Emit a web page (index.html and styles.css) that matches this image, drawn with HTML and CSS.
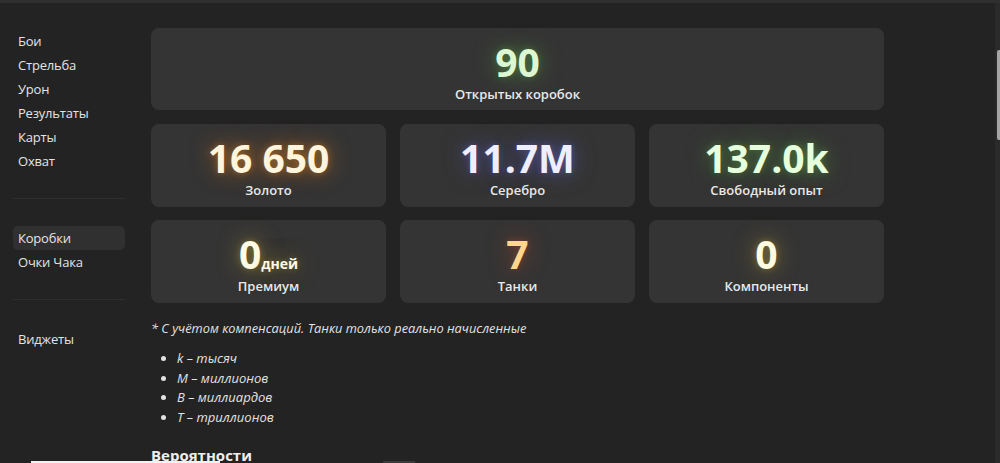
FILE: index.html
```html
<!DOCTYPE html>
<html lang="ru">
<head>
<meta charset="utf-8">
<link rel="stylesheet" href="styles.css">
</head>
<body>
<div class="topstrip"></div>
<div class="page">
  <aside class="sidebar">
    <nav class="navgroup">
      <a class="navitem">Бои</a>
      <a class="navitem">Стрельба</a>
      <a class="navitem">Урон</a>
      <a class="navitem">Результаты</a>
      <a class="navitem">Карты</a>
      <a class="navitem">Охват</a>
    </nav>
    <div class="divider"></div>
    <nav class="navgroup">
      <a class="navitem active">Коробки</a>
      <a class="navitem">Очки Чака</a>
    </nav>
    <div class="divider"></div>
    <nav class="navgroup">
      <a class="navitem">Виджеты</a>
    </nav>
  </aside>
  <main class="main">
    <div class="card wide">
      <div class="num g-green">90</div>
      <div class="label">Открытых коробок</div>
    </div>
    <div class="grid">
      <div class="card">
        <div class="num g-gold">16 650</div>
        <div class="label">Золото</div>
      </div>
      <div class="card">
        <div class="num g-silver">11.7M</div>
        <div class="label">Серебро</div>
      </div>
      <div class="card">
        <div class="num g-xp">137.0k</div>
        <div class="label">Свободный опыт</div>
      </div>
      <div class="card">
        <div class="num g-prem">0<span class="unit">дней</span></div>
        <div class="label">Премиум</div>
      </div>
      <div class="card">
        <div class="num g-tank">7</div>
        <div class="label">Танки</div>
      </div>
      <div class="card">
        <div class="num g-comp">0</div>
        <div class="label">Компоненты</div>
      </div>
    </div>
    <p class="note">* С учётом компенсаций. Танки только реально начисленные</p>
    <ul class="legend">
      <li>k – тысяч</li>
      <li>M – миллионов</li>
      <li>B – миллиардов</li>
      <li>T – триллионов</li>
    </ul>
    <h3 class="section">Вероятности</h3>
  </main>
</div>
<div class="scrolltrack"><div class="scrollthumb"></div></div>
<div class="bottomline a"></div>
<div class="bottomline b"></div>
</body>
</html>
```
FILE: styles.css
```css
html, body {
  margin: 0;
  padding: 0;
  height: 463px;
  overflow: hidden;
}
body {
  background: #232323;
  color: #e6e6e6;
  font-family: "Open Sans", "Noto Sans", sans-serif;
  font-size: 13px;
  position: relative;
}
.topstrip {
  height: 3px;
  background: #2f2f2f;
}
.page {
  display: flex;
  gap: 26px;
  padding: 25px 0 0 13px;
}
.sidebar {
  width: 112px;
  flex: none;
  padding-top: 1px;
}
.navgroup {
  display: flex;
  flex-direction: column;
}
.navitem {
  display: block;
  height: 24px;
  line-height: 24px;
  padding-left: 5px;
  border-radius: 5px;
  color: #e4e4e4;
  font-size: 13px;
  letter-spacing: -0.2px;
}
.navitem.active {
  background: #303030;
}
.divider {
  height: 1px;
  background: #2e2e2e;
  margin: 25px 0 27px;
}
.main {
  width: 733px;
  flex: none;
}
.card {
  background: #343434;
  border-radius: 8px;
  height: 83px;
  display: flex;
  flex-direction: column;
  align-items: center;
  justify-content: center;
  box-sizing: border-box;
  padding-top: 6px;
}
.card.wide {
  height: 82px;
}
.grid {
  display: grid;
  grid-template-columns: repeat(3, 1fr);
  gap: 13px 14px;
  margin-top: 14px;
}
.num {
  font-weight: 700;
  font-size: 39px;
  line-height: 40px;
  height: 40px;
  white-space: nowrap;
}
.unit {
  font-size: 14px;
  font-weight: 700;
  line-height: 1;
  color: #fffbe8;
}
.label {
  font-weight: 600;
  font-size: 13px;
  line-height: 18px;
  color: #e8e8e8;
  margin-top: 3px;
}
.g-green { color: #dcf7d2; text-shadow: 0 0 22px rgba(110, 190, 80, 0.5), 0 0 7px rgba(110, 190, 80, 0.35); }
.g-gold { color: #fff4dc; text-shadow: 0 0 22px rgba(230, 130, 30, 0.65), 0 0 7px rgba(230, 140, 40, 0.45); }
.g-silver { color: #eeeeff; text-shadow: 0 0 22px rgba(100, 100, 230, 0.55), 0 0 7px rgba(120, 120, 230, 0.4); }
.g-xp { color: #e6ffdc; text-shadow: 0 0 22px rgba(100, 190, 70, 0.5), 0 0 7px rgba(110, 190, 80, 0.35); }
.g-prem { color: #fffbe6; text-shadow: 0 0 22px rgba(220, 190, 60, 0.5), 0 0 7px rgba(220, 190, 60, 0.35); }
.g-tank { color: #ffd68c; text-shadow: 0 0 22px rgba(210, 80, 40, 0.55), 0 0 7px rgba(210, 90, 40, 0.35); }
.g-comp { color: #fffbe0; text-shadow: 0 0 22px rgba(220, 190, 60, 0.5), 0 0 7px rgba(220, 190, 60, 0.35); }
.note {
  font-style: italic;
  color: #e2e2e2;
  margin: 15px 0 0;
  line-height: 20px;
  font-size: 12.8px;
}
.legend {
  font-style: italic;
  color: #e2e2e2;
  margin: 11px 0 0;
  padding-left: 26px;
  line-height: 19.7px;
}
.legend li::marker {
  font-style: normal;
}
.section {
  font-size: 15px;
  font-weight: 700;
  margin: 17px 0 0;
  color: #eeeeee;
  line-height: 20px;
}
.scrolltrack {
  position: absolute;
  top: 3px;
  right: 0;
  width: 5px;
  bottom: 0;
  background: #2a2a2a;
}
.scrollthumb {
  position: absolute;
  top: 47px;
  right: 0;
  width: 3px;
  height: 90px;
  background: #a5a5a5;
  border-radius: 2px 0 0 2px;
}
.bottomline {
  position: absolute;
  bottom: 0;
  height: 2px;
  background: #f2f2f2;
}
.bottomline.a { left: 31px; width: 189px; }
.bottomline.b { left: 383px; width: 32px; background: #3a3a3a; }
```
